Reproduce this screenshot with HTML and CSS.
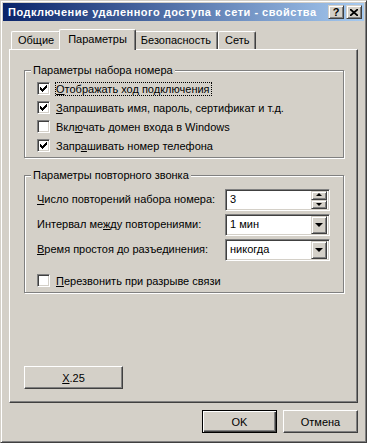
FILE: index.html
```html
<!doctype html>
<html lang="ru">
  <head>
    <meta charset="utf-8">
    <title>Подключение удаленного доступа к сети - свойства</title>
    <link rel="stylesheet" href="styles.css">
  </head>
  <body>
    <div class="window">
      <div class="titlebar">
        <span class="title">Подключение удаленного доступа к сети - свойства</span>
        <div class="caption-btns">
          <span class="caption-btn help">?</span>
          <span class="caption-btn close">
            <svg width="8" height="7" viewBox="0 0 8 7"><path d="M0 0L8 7M8 0L0 7" stroke="#000" stroke-width="1.7"/></svg>
          </span>
        </div>
      </div>

      <div class="content">
        <div class="tabs">
          <span class="tab">Общие</span>
          <span class="tab active">Параметры</span>
          <span class="tab">Безопасность</span>
          <span class="tab">Сеть</span>
        </div>

        <div class="panel">
          <fieldset class="group dial">
            <legend>Параметры набора номера</legend>
            <label class="check-row">
              <span class="checkbox checked"></span>
              <span class="caption focused"><u>О</u>тображать ход подключения</span>
            </label>
            <label class="check-row">
              <span class="checkbox checked"></span>
              <span class="caption"><u>З</u>апрашивать имя, пароль, сертификат и т.д.</span>
            </label>
            <label class="check-row">
              <span class="checkbox"></span>
              <span class="caption">Вкл<u>ю</u>чать домен входа в Windows</span>
            </label>
            <label class="check-row">
              <span class="checkbox checked"></span>
              <span class="caption">Запр<u>а</u>шивать номер телефона</span>
            </label>
          </fieldset>

          <fieldset class="group redial">
            <legend>Параметры повторного звонка</legend>
            <div class="field-row">
              <span class="field-label"><u>Ч</u>исло повторений набора номера:</span>
              <span class="field spin">
                <span class="value">3</span>
                <span class="spin-btns">
                  <span class="spin-btn up"></span>
                  <span class="spin-btn down"></span>
                </span>
              </span>
            </div>
            <div class="field-row">
              <span class="field-label">Интервал ме<u>ж</u>ду повторениями:</span>
              <span class="field combo">
                <span class="value">1 мин</span>
                <span class="drop-btn"></span>
              </span>
            </div>
            <div class="field-row">
              <span class="field-label"><u>В</u>ремя простоя до разъединения:</span>
              <span class="field combo">
                <span class="value">никогда</span>
                <span class="drop-btn"></span>
              </span>
            </div>
            <label class="check-row callback">
              <span class="checkbox"></span>
              <span class="caption"><u>П</u>ерезвонить при разрыве связи</span>
            </label>
          </fieldset>

          <div class="spacer"></div>
          <button class="btn x25"><u>X</u>.25</button>
        </div>

        <div class="actions">
          <button class="btn default">OK</button>
          <button class="btn">Отмена</button>
        </div>
      </div>
    </div>
  </body>
</html>
```

FILE: styles.css
```css
* {
  box-sizing: border-box;
}

body {
  margin: 0;
  background: #d4d0c8;
  color: #000;
  font: 11px/13px "Liberation Sans", Arial, sans-serif;
}

u {
  text-decoration: underline;
  text-underline-offset: 1px;
}

.window {
  width: 367px;
  height: 443px;
  padding: 2px;
  display: flex;
  flex-direction: column;
  background: #d4d0c8;
  border: 1px solid;
  border-color: #d4d0c8 #404040 #404040 #d4d0c8;
  box-shadow: inset 1px 1px #fff, inset -1px -1px #808080;
}

/* title bar */
.titlebar {
  height: 18px;
  padding: 0 2px 0 5px;
  display: flex;
  align-items: center;
  background: linear-gradient(to right, #0a246a, #a6caf0);
  color: #fff;
  font-weight: bold;
}

.title {
  flex: 1;
  white-space: nowrap;
  overflow: hidden;
  letter-spacing: 0.5px;
}

.caption-btns {
  display: flex;
  gap: 2px;
}

.caption-btn {
  width: 16px;
  height: 14px;
  display: flex;
  align-items: center;
  justify-content: center;
  background: #d4d0c8;
  color: #000;
  border: 1px solid;
  border-color: #d4d0c8 #404040 #404040 #d4d0c8;
  box-shadow: inset 1px 1px #fff, inset -1px -1px #808080;
  font: bold 11px/12px "Liberation Sans", Arial, sans-serif;
}

.caption-btn svg {
  display: block;
}

/* tabs + panel */
.content {
  flex: 1;
  padding: 8px 6px 7px;
  display: flex;
  flex-direction: column;
}

.tabs {
  height: 20px;
  padding-left: 2px;
  display: flex;
  align-items: flex-end;
}

.tab {
  height: 18px;
  padding: 0 6px;
  display: flex;
  align-items: center;
  border: 1px solid;
  border-bottom: 0;
  border-color: #fff #404040 #fff #fff;
  border-top-left-radius: 2px;
  border-top-right-radius: 2px;
  box-shadow: inset -1px 0 #808080;
  white-space: nowrap;
}

.tab.active {
  position: relative;
  z-index: 1;
  height: 21px;
  margin: 0 -2px -1px;
  padding: 0 8px 2px;
  background: #d4d0c8;
}

.panel {
  flex: 1;
  padding: 14px 13px 13px 14px;
  display: flex;
  flex-direction: column;
  border: 1px solid;
  border-color: #fff #404040 #404040 #fff;
  box-shadow: inset -1px -1px #808080;
}

/* group boxes */
.group {
  margin: 0;
  min-width: 0;
  padding: 2px 10px 2px 12px;
  border: 1px solid #808080;
  box-shadow: inset 1px 1px #fff, 1px 1px #fff;
}

.group legend {
  margin-left: -6px;
  padding: 0 2px;
  background: #d4d0c8;
  line-height: 13px;
}

.redial {
  margin-top: 11px;
  padding-top: 5px;
  padding-bottom: 2px;
}

.check-row {
  height: 19px;
  display: flex;
  align-items: center;
  gap: 5px;
}

.checkbox {
  flex: none;
  width: 13px;
  height: 13px;
  background: #fff;
  border: 1px solid;
  border-color: #808080 #fff #fff #808080;
  box-shadow: inset 1px 1px #404040, inset -1px -1px #d4d0c8;
}

.checkbox.checked {
  background: #fff url("data:image/svg+xml,%3Csvg xmlns='http://www.w3.org/2000/svg' width='11' height='11' viewBox='1 1 11 11'%3E%3Cpath d='M3.5 5v3M4.5 6v3M5.5 7v3M6.5 6v3M7.5 5v3M8.5 4v3M9.5 3v3' stroke='%23000' stroke-width='1' shape-rendering='crispEdges'/%3E%3C/svg%3E") no-repeat 0 0;
}

.caption {
  padding: 0 1px 0 0;
  border: 1px dotted transparent;
  line-height: 12px;
  white-space: nowrap;
}

.caption.focused {
  border-color: #000;
}

.callback {
  margin-top: 9px;
}

.field-row {
  height: 25px;
  display: flex;
  align-items: center;
}

.field-label {
  width: 188px;
  white-space: nowrap;
}

.field {
  width: 105px;
  height: 22px;
  padding: 2px;
  display: flex;
  align-items: center;
  background: #fff;
  border: 1px solid;
  border-color: #808080 #fff #fff #808080;
  box-shadow: inset 1px 1px #404040, inset -1px -1px #d4d0c8;
}

.field .value {
  flex: 1;
  padding-left: 2px;
}

.spin-btns {
  width: 16px;
  height: 18px;
  display: flex;
  flex-direction: column;
}

.spin-btn,
.drop-btn {
  position: relative;
  background: #d4d0c8;
  border: 1px solid;
  border-color: #d4d0c8 #404040 #404040 #d4d0c8;
  box-shadow: inset 1px 1px #fff, inset -1px -1px #808080;
}

.spin-btn {
  flex: 1;
}

.drop-btn {
  width: 16px;
  height: 18px;
}

.spin-btn::after,
.drop-btn::after {
  content: "";
  position: absolute;
  left: 50%;
  top: 50%;
  border-style: solid;
  border-color: transparent;
}

.spin-btn.up::after {
  margin: -2px 0 0 -3px;
  border-width: 0 3px 3px;
  border-bottom-color: #000;
}

.spin-btn.down::after {
  margin: -1px 0 0 -3px;
  border-width: 3px 3px 0;
  border-top-color: #000;
}

.drop-btn::after {
  margin: -2px 0 0 -4px;
  border-width: 4px 4px 0;
  border-top-color: #000;
}

.spacer {
  flex: 1;
}

/* push buttons */
.btn {
  width: 75px;
  height: 23px;
  padding: 0;
  background: #d4d0c8;
  color: #000;
  font: 11px "Liberation Sans", Arial, sans-serif;
  border: 1px solid;
  border-color: #fff #404040 #404040 #fff;
  box-shadow: inset -1px -1px #808080;
}

.btn.x25 {
  width: 99px;
}

.btn.default {
  border-color: #000;
  box-shadow: inset 1px 1px #fff, inset -1px -1px #404040, inset -2px -2px #808080;
}

.actions {
  margin-top: 7px;
  display: flex;
  justify-content: flex-end;
  gap: 6px;
}
```
